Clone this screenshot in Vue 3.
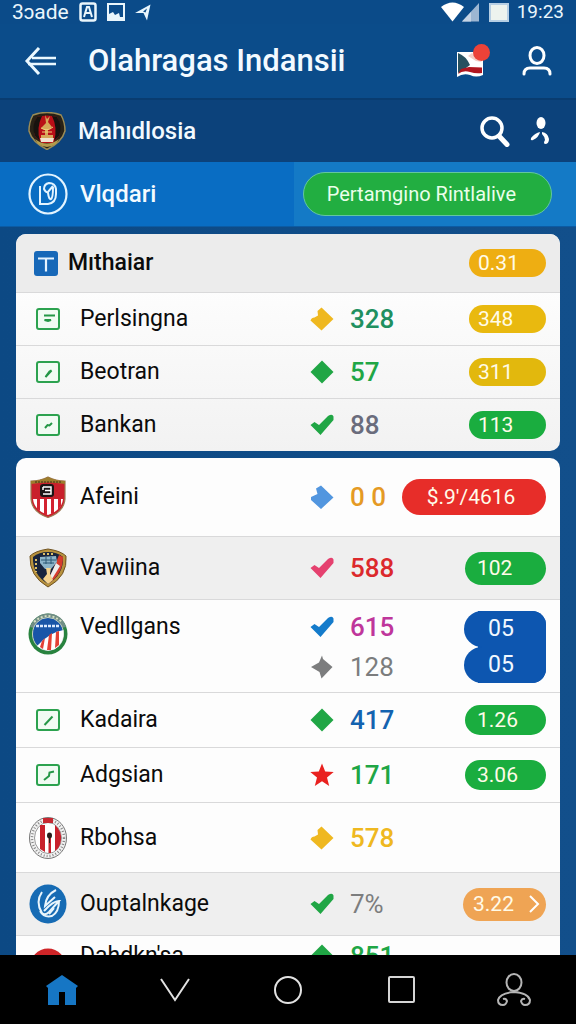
<script setup>
import { ref } from 'vue'

// Marker shapes, drawn on a 24x24 grid
const marks = {
  diamond: 'M12 .5 23.5 12 12 23.5 .5 12z',
  tag: 'M11.500 .5 23.500 12 11.500 23.500 .5 13.500Q1.500 10.500 4.500 10.500L8 8.500 7.500 4z',
  arrow: 'M6 3.500 11 .5 23.500 12.500 11 24 1 15 1 12 7.500 9z',
  kite: 'M12 .5 13 4 22.500 12 11.500 23.500 9.500 17 1 12 9 7.500z',
  check: 'M.5 12 4.500 9 9 12 18 3Q22.500 .5 23.500 3.500L23.500 7 10.500 22z',
  star: 'M12 .5 15.200 8.500 23.700 9 17 14.500 19.200 23 12 18.300 4.800 23 7 14.500 .3 9 8.800 8.500z'
}

// Glyphs inside the small green squares
const boxes = {
  note: 'M8 7.500H19M8.500 12H15L12 13z',
  pen: 'M9.500 16 15.500 9.500 13.500 10.500 10.500 14.500z',
  tilt: 'M9 14 11.500 11 13.500 11.500 16 9',
  slash: 'M8.500 16 16.500 7.500',
  zig: 'M8 16 13 12 13.500 8.500 18 7.500'
}

const summary = [
  { name: 'Mıthaiar', head: true, box: 'title', pill: '0.31', tone: 'amber' },
  { name: 'Perlsingna', box: 'note', mark: 'tag', markTone: 'yellow', value: '328', valueTone: 'teal', pill: '348', tone: 'gold' },
  { name: 'Beotran', box: 'pen', mark: 'diamond', markTone: 'green', value: '57', valueTone: 'green', pill: '311', tone: 'mustard' },
  { name: 'Bankan', box: 'tilt', mark: 'check', markTone: 'green', value: '88', valueTone: 'slate', pill: '113', tone: 'green' }
]

const teams = [
  { name: 'Afeini', size: 'xl', crest: 'stripes', mark: 'arrow', markTone: 'sky', value: '0 0', valueTone: 'orange', pill: '$.9\'/4616', tone: 'red' },
  { name: 'Vawiina', size: 'md', shade: true, crest: 'fist', mark: 'check', markTone: 'pink', value: '588', valueTone: 'red', pill: '102', tone: 'green' },
  {
    name: 'Vedllgans', size: 'double', crest: 'round', mark: 'check', markTone: 'blue', value: '615', valueTone: 'magenta', stack: ['05', '05'],
    second: { mark: 'kite', markTone: 'grey', value: '128', valueTone: 'grey' }
  },
  { name: 'Kadaira', size: 'sm', box: 'slash', mark: 'diamond', markTone: 'green', value: '417', valueTone: 'blue', pill: '1.26', tone: 'green' },
  { name: 'Adgsian', size: 'sm', box: 'zig', mark: 'star', markTone: 'red', value: '171', valueTone: 'green', pill: '3.06', tone: 'green' },
  { name: 'Rbohsa', size: 'lg', crest: 'ring', mark: 'tag', markTone: 'yellow', value: '578', valueTone: 'yellow' },
  { name: 'Ouptalnkage', size: 'md', shade: true, crest: 'swirl', mark: 'check', markTone: 'green', value: '7%', valueTone: 'grey', pill: '3.22', tone: 'peach', more: true },
  { name: 'Dahdkn\'sa', size: 'peek', crest: 'redcap', mark: 'diamond', markTone: 'green', value: '851', valueTone: 'green' }
]

const groups = [
  { id: 'summary', rows: summary },
  { id: 'teams', rows: teams }
]

const activeTab = ref('live')
</script>

<template>
  <div class="app">
    <div class="status">
      <div class="status-side">
        <span>3ɔade</span>
        <svg width="18" height="20" viewBox="0 0 18 20">
          <rect x="1.500" y="1.500" width="15" height="17" rx="2" fill="none" stroke="#eaf6fc" stroke-width="2.500" />
          <path d="M5 15 8 5H10L13 15M7 11H11" fill="none" stroke="#eaf6fc" stroke-width="2" />
        </svg>
        <svg width="18" height="18" viewBox="0 0 18 18">
          <rect x="1" y="1" width="16" height="16" fill="none" stroke="#eaf6fc" stroke-width="2" />
          <path d="M2 16V11L6 9 8 12 12 10 13 14H16V16z" fill="#eaf6fc" />
        </svg>
        <svg width="16" height="17" viewBox="0 0 16 17">
          <path d="M0 9 15.500 .5 12 16.500 8.500 9z" fill="#eaf6fc" />
          <path d="M8 7.500 12 4.500 10.500 8.500z" fill="#0c4b88" />
        </svg>
      </div>
      <div class="status-side right">
        <svg width="40" height="20" viewBox="0 0 40 20">
          <path d="M0 5Q11.500-4 23 5L11.500 19.500z" fill="#fff" />
          <path d="M21 19.500 38 1V19.500z" fill="#9db6d2" />
          <path d="M21 19.500 30 10V19.500z" fill="#c6d4e5" />
        </svg>
        <svg width="20" height="19" viewBox="0 0 20 19">
          <rect x="1" y="1" width="18" height="17" fill="#edf3ee" stroke="#b7cfe4" stroke-width="2" />
        </svg>
        <span class="clock">19:23</span>
      </div>
    </div>

    <header class="top">
      <button class="icon-btn" aria-label="Back">
        <svg width="32" height="28" viewBox="0 0 32 28">
          <path d="M15 1 3 14 15 27" fill="none" stroke="#eaf8ff" stroke-width="3" />
          <path d="M8 11H32M4 17H32" stroke="#eaf8ff" stroke-width="2.500" />
        </svg>
      </button>
      <h1>Olahragas Indansii</h1>
      <button class="icon-btn" aria-label="Language">
        <svg width="34" height="34" viewBox="0 0 34 34">
          <path d="M1 8H27V31Q20 34 14 31 7 29 1 33z" fill="#fff" />
          <path d="M2 9Q10 12 14 21L6 27 2 29z" fill="#275160" />
          <path d="M2 30 5 25 13 23 26 23.500V29Q20 30 14 28 7 26 2 30z" fill="#b1161f" />
          <path d="M12 12 20 17 26 18 16 9z" fill="#f4cdc6" />
          <circle cx="25.500" cy="8.500" r="8.500" fill="#ec4238" />
        </svg>
      </button>
      <button class="icon-btn" aria-label="Profile">
        <svg width="30" height="30" viewBox="0 0 30 30">
          <ellipse cx="15" cy="9.500" rx="7" ry="8" fill="none" stroke="#fff" stroke-width="3" />
          <path d="M2 28Q2 22 8 22H22Q28 22 28 28" fill="none" stroke="#fff" stroke-width="3" stroke-linecap="round" />
        </svg>
      </button>
    </header>

    <div class="league">
      <svg width="38" height="38" viewBox="0 0 38 38">
        <path d="M5 3Q19-2 33 3 37 10 37 19 34 30 19 37.500 4 30 1 19 1 10 5 3z" fill="#282116" stroke="#9b8b55" stroke-width="1.500" />
        <path d="M9 5Q4 14 7 24L14 31H25L31 24Q34 14 29 5 19 2 9 5z" fill="#b90f17" />
        <path d="M9 5Q3 14 7 24L12 29Q8 16 14 4zM29 5Q35 14 31 24L26 29Q30 16 24 4z" fill="#17130f" />
        <path d="M17 3 19 7 22 4 20 10 24 15 20 18V23H25V26H13V23H17V18L13 16 18 11z" fill="#d6a759" />
        <path d="M13 16Q19 20 25 15M14 20H24" stroke="#f0cf7a" fill="none" />
        <path d="M12 26H26L25 30H13z" fill="#f2e2ce" />
        <path d="M7 27Q19 36 31 27L28 32Q19 38 10 32z" fill="#b39b4b" />
      </svg>
      <span class="bar-name">Mahıdlosia</span>
      <button class="icon-btn" aria-label="Search">
        <svg width="30" height="31" viewBox="0 0 30 31">
          <circle cx="12" cy="12" r="10" fill="none" stroke="#fff" stroke-width="3.500" />
          <path d="M19 20 27 28.500" stroke="#fff" stroke-width="5" stroke-linecap="round" />
        </svg>
      </button>
      <button class="icon-btn" aria-label="Followers">
        <svg width="20" height="28" viewBox="0 0 20 28">
          <ellipse cx="11" cy="6" rx="4.500" ry="6" fill="#fff" />
          <path d="M10 15Q9 20 3 23 0 24 1 21 5 16 10 15zM12 15Q18 16 19 22 19 27 15 27 13 26 15 23 15 20 12 17z" fill="#fff" />
        </svg>
      </button>
    </div>

    <nav class="tabs">
      <button class="tab" @click="activeTab = 'club'">
        <svg width="40" height="42" viewBox="0 0 40 42">
          <ellipse cx="20" cy="21" rx="18.500" ry="19.500" fill="none" stroke="#e3f4ff" stroke-width="2.200" />
          <path d="M12 13V31H20Q28 30 28 21V16Q27 10 21 10 16 11 16 16 18 20 20 19L25 13M20 20Q21 27 23 26 25 25 25 14" fill="none" stroke="#e3f4ff" stroke-width="2" />
        </svg>
        <span class="bar-name">Vlqdari</span>
      </button>
      <div class="tab-live">
        <button class="live-btn" @click="activeTab = 'live'">Pertamgino Rintlalive</button>
      </div>
    </nav>

    <main class="list">
      <ul v-for="group in groups" :key="group.id" class="card" :class="group.id">
        <li v-for="row in group.rows" :key="row.name" class="row" :class="[row.size, { head: row.head, shade: row.shade }]">
          <div class="badge">
            <svg v-if="row.box === 'title'" width="24" height="25" viewBox="0 0 24 25">
              <rect width="24" height="25" rx="3" fill="#1768b8" />
              <path d="M4 7.500H20M12 7.500V20.500" stroke="#e5f3ff" stroke-width="2.200" />
            </svg>
            <svg v-else-if="row.box" width="24" height="22" viewBox="0 0 24 22">
              <rect x="1" y="1" width="22" height="20" rx="2" fill="#f1fbf3" stroke="#2ca24f" stroke-width="2" />
              <path :d="boxes[row.box]" fill="none" stroke="#249746" stroke-width="2" />
            </svg>

            <svg v-else-if="row.crest === 'stripes'" width="36" height="42" viewBox="0 0 36 42">
              <path d="M1 5Q10 5 18 1 26 5 35 5V23Q34 36 18 41.500 2 36 1 23z" fill="#c9202b" stroke="#9d7b55" stroke-width="1.200" />
              <path d="M3 23H33Q32 34 18 39 4 34 3 23z" fill="#fff" />
              <path d="M7 23V33L10 35V23zM14 23V38L17 39V23zM21 23V38L24 37V23zM28 23V34L31 30V23z" fill="#d32331" />
              <path d="M1 5Q10 5 18 1 26 5 35 5V8Q18 5 1 8z" fill="#9d7d2d" />
              <path d="M5 6H31" stroke="#3d3115" stroke-dasharray="2 1" />
              <rect x="10" y="8" width="14" height="13" rx="3" fill="#1b1616" />
              <path d="M13 11H21V18H13M15 14.500H21M13 11V14" stroke="#fff" stroke-width="1.500" fill="none" />
            </svg>
            <svg v-else-if="row.crest === 'fist'" width="38" height="40" viewBox="0 0 38 40">
              <path d="M1 8Q6 3 19 1 32 3 37 8 39 28 19 39 0 28 1 8z" fill="#b8923d" stroke="#705322" />
              <path d="M4 9Q10 4 19 4 28 4 34 9 35 26 19 36 3 26 4 9z" fill="#18243d" />
              <path d="M30 7 34 9Q34 26 20 35L18 33 24 22z" fill="#d63b2c" />
              <path d="M27 15 31 18 23 31 21 28z" fill="#eee" />
              <path d="M11 9 27 8 28 14 22 21H16L11 15z" fill="#8db4c9" />
              <path d="M12 12H27M14 15H25M17 9V16M22 9V16" stroke="#2d5874" fill="none" />
              <path d="M17 20H22L21 26 24 32 19 36 14 31 18 26z" fill="#f4d28d" />
              <path d="M7 11V24M14 6H24" stroke="#dfbf67" stroke-dasharray="2 2" stroke-width="2" />
            </svg>
            <svg v-else-if="row.crest === 'round'" width="40" height="42" viewBox="0 0 40 42">
              <ellipse cx="20" cy="21" rx="19.500" ry="20.500" fill="#28833f" />
              <path d="M2 14Q7 1 20 .5 34 1 38 14L33 15H6z" fill="#728e86" />
              <path d="M6 9Q20-3 34 9" fill="none" stroke="#d5dfc1" stroke-width="2" stroke-dasharray="2 2" />
              <ellipse cx="20" cy="21" rx="15.500" ry="16.500" fill="#1955a8" stroke="#c7d2bd" />
              <path d="M35.500 17Q22 19 9 33 18 40 27 36 37 30 35.500 17z" fill="#fff" />
              <path d="M14 28 12 34 15 36 17 25zM21 22 19 37H23L24 20zM28 19 27 35 31 32 31 18z" fill="#e34135" />
              <path d="M8 13H31" stroke="#dceaff" stroke-width="2.500" stroke-dasharray="3 1" />
            </svg>
            <svg v-else-if="row.crest === 'ring'" width="38" height="42" viewBox="0 0 38 42">
              <ellipse cx="19" cy="21" rx="18.500" ry="20.500" fill="#f2f2f2" stroke="#777" />
              <ellipse cx="19" cy="21" rx="16" ry="18" fill="none" stroke="#888" stroke-width="2.500" stroke-dasharray="1 2" />
              <ellipse cx="19" cy="21" rx="13.500" ry="15.500" fill="#fff" stroke="#999" />
              <path d="M11 8H16V35L11 32zM19.500 20H22V36H19.500zM26 8Q33 14 32 23 31 31 26 34z" fill="#c8202b" />
              <path d="M14 1H24V6H14z" fill="#c62831" />
              <ellipse cx="20.500" cy="18.500" rx="2.500" ry="3" fill="#291d1b" />
              <path d="M20.500 20V26" stroke="#291d1b" />
            </svg>
            <svg v-else-if="row.crest === 'swirl'" width="38" height="40" viewBox="0 0 38 40">
              <ellipse cx="19" cy="20" rx="18.500" ry="19.500" fill="#166bb4" />
              <path d="M13 8Q6 18 13 29 16 32 20 28L30 17Q24 17 15 27M27 6Q17 11 16 22L26 13M30 17Q30 28 23 32 15 34 11 27M20 30 25 24" fill="none" stroke="#e9f5fc" stroke-width="2" />
            </svg>
            <svg v-else width="38" height="40" viewBox="0 0 38 40">
              <ellipse cx="19" cy="20" rx="18.500" ry="19.500" fill="#cf2528" />
            </svg>
          </div>

          <span class="name">{{ row.name }}</span>

          <div class="marks">
            <svg v-if="row.mark" class="mark" :class="'c-' + row.markTone" width="24" height="24" viewBox="0 0 24 24">
              <path :d="marks[row.mark]" />
            </svg>
            <svg v-if="row.second" class="mark" :class="'c-' + row.second.markTone" width="24" height="24" viewBox="0 0 24 24">
              <path :d="marks[row.second.mark]" />
            </svg>
          </div>

          <div class="result">
            <div class="values">
              <span v-if="row.value" class="value" :class="'c-' + row.valueTone">{{ row.value }}</span>
              <span v-if="row.second" class="value" :class="'c-' + row.second.valueTone">{{ row.second.value }}</span>
            </div>
            <div v-if="row.stack" class="stack">
              <span v-for="(n, i) in row.stack" :key="i">{{ n }}</span>
            </div>
            <button v-else-if="row.more" class="pill more" :class="row.tone">
              {{ row.pill }}
              <svg width="12" height="18" viewBox="0 0 12 18">
                <path d="M2 1 10 9 2 17" fill="none" stroke="#fff" stroke-width="2" />
              </svg>
            </button>
            <span v-else-if="row.pill" class="pill" :class="row.tone">{{ row.pill }}</span>
          </div>
        </li>
      </ul>
    </main>

    <nav class="sysnav">
      <button aria-label="Home">
        <svg width="34" height="32" viewBox="0 0 34 32">
          <path d="M17 1 33 12 31 14V31H20V18H14V31H3V14L1 12z" fill="#1676c4" />
        </svg>
      </button>
      <button aria-label="Hide">
        <svg width="30" height="24" viewBox="0 0 30 24">
          <path d="M1 1 15 22 29 1" fill="none" stroke="#e2e2e2" stroke-width="2" />
        </svg>
      </button>
      <button aria-label="Center">
        <svg width="28" height="28" viewBox="0 0 28 28">
          <circle cx="14" cy="14" r="13" fill="none" stroke="#e2e2e2" stroke-width="2" />
        </svg>
      </button>
      <button aria-label="Recent">
        <svg width="27" height="27" viewBox="0 0 27 27">
          <rect x="1" y="1" width="25" height="25" rx="1" fill="none" stroke="#d5d5d5" stroke-width="2" />
        </svg>
      </button>
      <button aria-label="Account">
        <svg width="34" height="34" viewBox="0 0 34 34">
          <g fill="none" stroke="#b5b5b5" stroke-width="2">
            <ellipse cx="17" cy="9.500" rx="7.500" ry="8.500" />
            <path d="M6 26Q9 25 10 28 9 32 6 32 1 32 1 27 3 20 17 19 31 20 33 27 33 32 28 32 25 32 24 28 25 25 28 26" />
          </g>
        </svg>
      </button>
    </nav>
  </div>
</template>

<style>
body {
  margin: 0;
  background: #0c4984;
}
</style>

<style scoped>
.app {
  height: 100vh;
  display: flex;
  flex-direction: column;
  overflow: hidden;
  font-family: Roboto, 'Liberation Sans', sans-serif;
  background: linear-gradient(90deg, #0c4984, #124f8b);
  color: #0b0b0b;
}

button {
  border: 0;
  padding: 0;
  background: none;
  color: inherit;
  font: inherit;
  cursor: pointer;
}

svg {
  display: block;
  flex: none;
}

/* Status bar */
.status {
  flex: none;
  display: flex;
  justify-content: space-between;
  height: 24px;
  padding: 0 12px;
  color: #eaf6fc;
  font-size: 21px;
  line-height: 24px;
  background: #0b4b89;
}

.status-side {
  display: flex;
  align-items: center;
  gap: 10px;
}

.status-side.right {
  gap: 8px;
}

.clock {
  font-size: 19px;
}

/* Title bar */
.top {
  flex: none;
  display: flex;
  align-items: center;
  height: 76px;
  padding: 0 24px;
  background: #0b4c8a;
  box-sizing: border-box;
  border-bottom: 2px solid #093c70;
}

.top h1 {
  flex: 1;
  margin: 0 0 0 32px;
  color: #f3faff;
  font-size: 31px;
  font-weight: 500;
  line-height: 40px;
}

.icon-btn + .icon-btn {
  margin-left: 32px;
}

/* League bar */
.league {
  flex: none;
  display: flex;
  align-items: center;
  height: 62px;
  padding: 0 26px 0 28px;
  background: #0c427b;
  color: #f3faff;
}

.bar-name {
  flex: 1;
  margin-left: 12px;
  font-size: 24px;
  font-weight: 500;
  text-align: left;
}

.league .icon-btn + .icon-btn {
  margin-left: 20px;
}

/* Tabs */
.tabs {
  flex: none;
  display: flex;
  height: 65px;
  background: #096dc3;
  box-sizing: border-box;
  border-bottom: 1px solid #0b5ba4;
}

.tab {
  flex: 1;
  display: flex;
  align-items: center;
  padding-left: 28px;
  color: #f3faff;
}

.tab-live {
  flex: none;
  width: 49%;
  box-sizing: border-box;
  display: flex;
  align-items: center;
  padding: 0 24px 0 9px;
  background: #147ac6;
}

.live-btn {
  flex: 1;
  height: 44px;
  border: 1px solid #63c6a0;
  border-radius: 22px;
  background: #22ae41;
  color: #eaffea;
  font-size: 20px;
  padding-right: 12px;
}

/* Cards */
.list {
  flex: 1;
  min-height: 0;
  overflow: hidden;
  display: flex;
  flex-direction: column;
  gap: 7px;
  padding: 7px 16px 0;
}

.card {
  flex: none;
  margin: 0;
  padding: 0;
  list-style: none;
  overflow: hidden;
  border-radius: 10px;
  background: #fdfdfd;
}

.summary {
  background: linear-gradient(#fdfdfd 25%, #f2f2f2);
}

.row {
  display: grid;
  grid-template-columns: 64px 230fr 40px 196fr;
  align-items: center;
  height: 53px;
  padding-right: 14px;
  box-sizing: border-box;
  border-bottom: 1px solid #d9d9da;
}

.row:last-child {
  border-bottom: 0;
}

.row.head {
  grid-template-columns: 52px 242fr 40px 196fr;
  height: 59px;
  background: #ececec;
}

.row.head .badge {
  padding-left: 8px;
}

.row.shade {
  background: #efefef;
}

.summary .row:last-child { height: 52px; }
.row.xl { height: 79px; }
.row.lg { height: 70px; }
.row.md { height: 63px; }
.row.sm { height: 55px; }

.row.double,
.row.peek {
  align-items: start;
  height: 93px;
  padding-top: 7px;
}

.row.peek {
  padding-top: 0;
}

.badge {
  display: flex;
  justify-content: center;
}

.double .badge {
  padding-top: 6px;
}

.peek .badge {
  padding-top: 12px;
}

.name {
  font-size: 23px;
  line-height: 40px;
}

.head .name {
  font-weight: 500;
}

.marks,
.values {
  display: flex;
  flex-direction: column;
}

.mark {
  margin: 8px 0;
  fill: currentColor;
}

.result {
  display: flex;
  align-items: center;
  justify-content: space-between;
}

.value {
  font-size: 26px;
  font-weight: 500;
  line-height: 40px;
}

.pill {
  display: flex;
  align-items: center;
  width: 77px;
  height: 28px;
  padding-left: 9px;
  box-sizing: border-box;
  border-radius: 18px;
  color: #fffbe8;
  font-size: 21px;
}

.md .pill {
  width: 81px;
  height: 33px;
  padding-left: 12px;
}

.sm .pill {
  width: 81px;
  height: 30px;
  padding-left: 12px;
}

.xl .pill {
  justify-content: center;
  width: 144px;
  height: 36px;
  padding: 0 6px 0 0;
}

.md .more {
  justify-content: space-between;
  width: 83px;
  padding: 0 6px 0 10px;
}

.pill.amber { background: #eeae12; }
.pill.gold { background: #e9b90f; }
.pill.mustard { background: #e2b80d; }
.pill.green { background: #1aad3f; }
.pill.red { background: #e72d29; }
.pill.peach { background: #efa454; }

/* Two merged blue score bubbles */
.double .result {
  align-items: start;
}

.stack {
  display: flex;
  flex-direction: column;
  width: 82px;
  margin-top: 4px;
  overflow: hidden;
  border-radius: 0 14px 14px 0;
  background: linear-gradient(90deg, transparent 14px, #0d56b0 14px);
  color: #f2f8ff;
  font-size: 23px;
  line-height: 36px;
  text-align: center;
}

.stack span {
  padding-right: 8px;
  border-radius: 18px 0 0 18px;
  background: #0d56b0;
}

.c-yellow { color: #efb820; }
.c-green { color: #20a645; }
.c-teal { color: #209060; }
.c-slate { color: #6a6c7c; }
.c-sky { color: #5296df; }
.c-orange { color: #e59a24; }
.c-pink { color: #e5416f; }
.c-red { color: #dc292c; }
.c-blue { color: #1463b0; }
.c-magenta { color: #bf369b; }
.c-grey { color: #7c7d7e; }

.mark.c-blue { color: #147bcb; }
.mark.c-red { color: #e9211f; }
.value.c-grey { font-weight: 400; }

/* System navigation */
.sysnav {
  flex: none;
  display: flex;
  height: 69px;
  padding: 0 5px;
  background: #000;
}

.sysnav button {
  flex: 1;
  display: flex;
  align-items: center;
  justify-content: center;
}
</style>
